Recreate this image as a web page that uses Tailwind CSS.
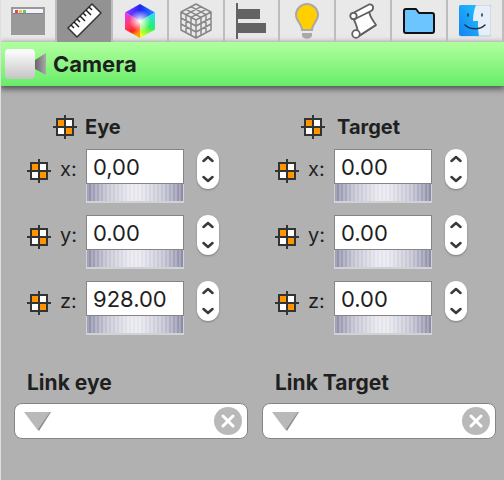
<!DOCTYPE html>
<html lang="en">
<head>
    <meta charset="UTF-8">
    <meta name="viewport" content="width=device-width, initial-scale=1.0">
    <title>Camera</title>
    <script src="https://cdn.jsdelivr.net/npm/@tailwindcss/browser@4"></script>
    <style>
        body {
            font-family: Inter, "Noto Sans", sans-serif;
        }
    </style>
</head>
<body class="bg-[#b1b1b1] text-[#1f1f1f] min-h-screen border-l border-[#dedede]">

    <!-- shared icons -->
    <svg class="hidden">
        <symbol id="target-icon" viewBox="0 0 24 24">
            <path fill="#fff" d="M4 4h16v16H4z"/>
            <path fill="#ff9500" d="M4 4h8v8H4zM12 12h8v8h-8z"/>
            <path fill="none" stroke="#333" stroke-width="2" d="M4 4h16v16H4zM12 0v24M0 12h24"/>
        </symbol>
        <symbol id="chevron-up" viewBox="0 0 12 8">
            <path fill="none" stroke="#3a3a3a" stroke-width="2.5" stroke-linecap="round" stroke-linejoin="round" d="M1.5 6 6 2l4.5 4"/>
        </symbol>
        <symbol id="chevron-down" viewBox="0 0 12 8">
            <path fill="none" stroke="#3a3a3a" stroke-width="2.5" stroke-linecap="round" stroke-linejoin="round" d="M1.5 2 6 6l4.500-4"/>
        </symbol>
        <symbol id="triangle" viewBox="0 0 28 20">
            <path fill="#8c8c8c" d="M1 0h26L15 19z"/>
            <path fill="#b9b9b9" d="M0 0h26L13.500 18z"/>
        </symbol>
        <symbol id="clear" viewBox="0 0 28 28">
            <circle cx="14" cy="14" r="14" fill="#b9b9b9"/>
            <path stroke="#fff" stroke-width="3" stroke-linecap="round" d="m9 9 10 10M19 9 9 19"/>
        </symbol>
    </svg>

    <nav class="grid grid-cols-9 h-[42px] bg-[#e9e9e9]">
        <button aria-label="Window" class="flex items-center justify-center border-r-2 border-[#bdbdbd]">
            <svg class="w-[34px] h-7" viewBox="0 0 34 28">
                <path fill="#999" d="M0 0h34v28H0z"/>
                <path fill="#f3f3f8" d="M2 2h30v5H2z"/>
                <path fill="#7d7d9c" d="M2 6h30v1H2z"/>
                <path fill="#e5484a" d="M4 3h3v3H4z"/>
                <path fill="#f2c04c" d="M8 3h3v3H8z"/>
                <path fill="#6cc46a" d="M12 3h3v3h-3z"/>
            </svg>
        </button>
        <button aria-label="Measure" class="flex items-center justify-center border-r-2 border-[#bdbdbd] bg-[#929292]">
            <svg class="w-9 h-9" viewBox="0 0 36 36">
                <path fill="#fff" stroke="#333" stroke-width="1.500" stroke-linejoin="round" d="M2 25 26 1l9 9-24 24z"/>
                <path fill="none" stroke="#222" stroke-width="1.500" d="m5 22 3 3M8 19l5 5M11 16l3 3M14 13l5 5M17 10l3 3M20 7l5 5M23 4l3 3"/>
            </svg>
        </button>
        <button aria-label="Color" class="flex items-center justify-center border-r-2 border-[#bdbdbd]">
            <svg class="w-8 h-[34px]" viewBox="0 0 32 34">
                <defs>
                    <linearGradient id="cube-top" x1="0" y1="0" x2="1" y2="0">
                        <stop offset="0" stop-color="#a43cff"/><stop offset=".5" stop-color="#1c26f5"/><stop offset="1" stop-color="#2590ff"/>
                    </linearGradient>
                    <linearGradient id="cube-left" x1="0" y1="0" x2=".4" y2="1">
                        <stop offset="0" stop-color="#e23cff"/><stop offset=".5" stop-color="#ff3a6c"/><stop offset=".8" stop-color="#ff2020"/><stop offset="1" stop-color="#ff9a10"/>
                    </linearGradient>
                    <linearGradient id="cube-right" x1=".8" y1="0" x2=".3" y2="1">
                        <stop offset="0" stop-color="#25dfff"/><stop offset=".5" stop-color="#28f060"/><stop offset="1" stop-color="#eaff20"/>
                    </linearGradient>
                    <radialGradient id="cube-glow" gradientUnits="userSpaceOnUse" cx="16" cy="17" r="11">
                        <stop offset="0" stop-color="#fff"/><stop offset="1" stop-color="#fff" stop-opacity="0"/>
                    </radialGradient>
                </defs>
                <path fill="url(#cube-top)" d="M16 0 31 8.500 16 17 1 8.500z"/>
                <path fill="url(#cube-left)" d="M1 8.500 16 17v17L1 25.500z"/>
                <path fill="url(#cube-right)" d="M31 8.500 16 17v17l15-8.500z"/>
                <path fill="url(#cube-glow)" d="M16 0 31 8.500v17L16 34 1 25.500v-17z"/>
            </svg>
        </button>
        <button aria-label="Grid" class="flex items-center justify-center border-r-2 border-[#bdbdbd]">
            <svg class="w-8 h-9" viewBox="0 0 32 36">
                <path fill="none" stroke="#868686" stroke-width="1.500" stroke-linejoin="round" d="M16 1 31 9v18l-15 8-15-8V9zM1 9l15 8 15-8M16 17v18M1 15l15 8 15-8M1 21l15 8 15-8M6 11.700v18M11 14.300v18M26 11.700v18M21 14.300v18M6 6.300l15 8M11 3.700l15 8M26 6.300l-15 8M21 3.700l-15 8"/>
            </svg>
        </button>
        <button aria-label="Align" class="flex items-center justify-center border-r-2 border-[#bdbdbd]">
            <svg class="w-[30px] h-9" viewBox="0 0 30 36">
                <path fill="#636363" d="M0 0h2v36H0zM2 6h22v10H2zM2 20h28v10H2z"/>
            </svg>
        </button>
        <button aria-label="Light" class="flex items-center justify-center border-r-2 border-[#bdbdbd]">
            <svg class="w-6 h-9" viewBox="0 0 24 36">
                <path fill="#ffcf00" stroke="#a9a9a9" stroke-width="2" d="M7 27c0-6-6-9-6-15a11 11 0 0 1 22 0c0 6-6 9-6 15z"/>
                <path fill="#a9a9a9" d="M7 30h10v2c0 5-10 5-10 0z"/>
            </svg>
        </button>
        <button aria-label="Script" class="flex items-center justify-center border-r-2 border-[#bdbdbd]">
            <svg class="w-7 h-9" viewBox="0 0 28 36">
                <g fill="#fff" stroke="#606060" stroke-width="1.800" stroke-linejoin="round">
                    <path d="M4 15 20 7c0 6 3 9 7 15L10 33c-1-1 0-3-1-4C8 24 7 20 4 15z"/>
                    <path d="M4 10 20 1.500c5-1 5 5 2 6.500L6 16z"/>
                    <circle cx="4.500" cy="13" r="3.200"/>
                    <circle cx="7" cy="31" r="3.800"/>
                    <path fill="none" d="M10 33l17-11"/>
                </g>
            </svg>
        </button>
        <button aria-label="Folder" class="flex items-center justify-center border-r-2 border-[#bdbdbd]">
            <svg class="w-8 h-7" viewBox="0 0 32 28">
                <path fill="#6cc5ff" stroke="#111" stroke-width="2" stroke-linejoin="round" d="M1 4q0-2 2-2h10l3 4h13q2 0 2 2v16q0 2-2 2H3q-2 0-2-2z"/>
            </svg>
        </button>
        <button aria-label="Finder" class="flex items-center justify-center border-r-2 border-[#bdbdbd]">
            <svg class="w-8 h-8" viewBox="0 0 32 32">
                <defs>
                    <linearGradient id="face" x1="1" y1="0" x2="0" y2="1">
                        <stop offset="0" stop-color="#22c3fa"/><stop offset="1" stop-color="#1482f6"/>
                    </linearGradient>
                </defs>
                <rect width="32" height="31" rx="2" fill="#e6eff9" stroke="#8aa" stroke-width=".5"/>
                <path fill="url(#face)" d="M2 0h15c-2 5-3 10-3 16h5c0 5 0 10 1 15H2q-2 0-2-2V2q0-2 2-2z"/>
                <path fill="none" stroke="#16324f" stroke-width="1.500" stroke-linecap="round" d="M9 9v2M23 9v2M6 20c5 5 15 5 20 0"/>
            </svg>
        </button>
    </nav>

    <header class="flex items-center gap-[7px] h-11 pl-1 bg-linear-to-b from-[#b0ff9e] to-[#65ed68] shadow-[0_2px_6px_1px_rgba(0,0,0,0.55)]">
        <svg class="w-[41px] h-8" viewBox="0 0 41 32">
            <defs>
                <linearGradient id="cam-body" x1="0" y1="0" x2="0" y2="1">
                    <stop offset="0" stop-color="#fff"/><stop offset="1" stop-color="#c5c5c5"/>
                </linearGradient>
                <linearGradient id="cam-lens" x1="0" y1="0" x2="1" y2="0">
                    <stop offset="0" stop-color="#666"/><stop offset="1" stop-color="#aaa"/>
                </linearGradient>
            </defs>
            <path fill="url(#cam-lens)" d="M30 12 41 5v22l-11-6z"/>
            <rect x="0" y="1" width="30" height="30" rx="4" fill="url(#cam-body)"/>
        </svg>
        <h1 class="text-[22px] leading-7 font-bold">Camera</h1>
    </header>

    <main class="grid grid-cols-2 gap-x-[14px] pl-[13px] pr-2 pt-[27px]">
        <section>
            <div class="flex items-center gap-2 h-7 pl-[39px]">
                <svg class="size-6"><use href="#target-icon"/></svg>
                <h2 class="text-xl font-bold">Eye</h2>
            </div>
            <div class="pl-[13px] pt-2 flex flex-col gap-3">
                <div class="flex items-start h-[54px]">
                    <svg class="size-6 mt-[10px] shrink-0"><use href="#target-icon"/></svg>
                    <label for="eye-x" class="w-[35px] pl-[9px] pt-2 text-xl leading-6 shrink-0">x:</label>
                    <div class="w-[98px]">
                        <input id="eye-x" type="text" value="0,00" class="block w-full h-[35px] px-1.5 bg-white border border-[#858585] text-[22px]">
                        <input type="range" aria-label="Eye x wheel" class="block w-full h-[19px] appearance-none border-x border-b-2 border-[#d2d2d6] bg-[repeating-linear-gradient(90deg,#ffffff30_0_2px,#77779908_2px_4px),linear-gradient(90deg,#8b8ba6,#c4c4d3_20%,#e8e8ef_45%,#e8e8ef_55%,#c4c4d3_80%,#8b8ba6)] [&::-webkit-slider-thumb]:opacity-0">
                    </div>
                    <div class="flex flex-col ml-[13px] w-[22px] h-10 rounded-[11px] bg-white shadow-[0_1px_2px_rgba(0,0,0,0.3)]">
                        <button aria-label="Increase eye x" class="flex flex-1 items-center justify-center"><svg class="w-3 h-2"><use href="#chevron-up"/></svg></button>
                        <button aria-label="Decrease eye x" class="flex flex-1 items-center justify-center"><svg class="w-3 h-2"><use href="#chevron-down"/></svg></button>
                    </div>
                </div>
                <div class="flex items-start h-[54px]">
                    <svg class="size-6 mt-[10px] shrink-0"><use href="#target-icon"/></svg>
                    <label for="eye-y" class="w-[35px] pl-[9px] pt-2 text-xl leading-6 shrink-0">y:</label>
                    <div class="w-[98px]">
                        <input id="eye-y" type="text" value="0.00" class="block w-full h-[35px] px-1.5 bg-white border border-[#858585] text-[22px]">
                        <input type="range" aria-label="Eye y wheel" class="block w-full h-[19px] appearance-none border-x border-b-2 border-[#d2d2d6] bg-[repeating-linear-gradient(90deg,#ffffff30_0_2px,#77779908_2px_4px),linear-gradient(90deg,#8b8ba6,#c4c4d3_20%,#e8e8ef_45%,#e8e8ef_55%,#c4c4d3_80%,#8b8ba6)] [&::-webkit-slider-thumb]:opacity-0">
                    </div>
                    <div class="flex flex-col ml-[13px] w-[22px] h-10 rounded-[11px] bg-white shadow-[0_1px_2px_rgba(0,0,0,0.3)]">
                        <button aria-label="Increase eye y" class="flex flex-1 items-center justify-center"><svg class="w-3 h-2"><use href="#chevron-up"/></svg></button>
                        <button aria-label="Decrease eye y" class="flex flex-1 items-center justify-center"><svg class="w-3 h-2"><use href="#chevron-down"/></svg></button>
                    </div>
                </div>
                <div class="flex items-start h-[54px]">
                    <svg class="size-6 mt-[10px] shrink-0"><use href="#target-icon"/></svg>
                    <label for="eye-z" class="w-[35px] pl-[9px] pt-2 text-xl leading-6 shrink-0">z:</label>
                    <div class="w-[98px]">
                        <input id="eye-z" type="text" value="928.00" class="block w-full h-[35px] px-1.5 bg-white border border-[#858585] text-[22px]">
                        <input type="range" aria-label="Eye z wheel" class="block w-full h-[19px] appearance-none border-x border-b-2 border-[#d2d2d6] bg-[repeating-linear-gradient(90deg,#ffffff30_0_2px,#77779908_2px_4px),linear-gradient(90deg,#8b8ba6,#c4c4d3_20%,#e8e8ef_45%,#e8e8ef_55%,#c4c4d3_80%,#8b8ba6)] [&::-webkit-slider-thumb]:opacity-0">
                    </div>
                    <div class="flex flex-col ml-[13px] w-[22px] h-10 rounded-[11px] bg-white shadow-[0_1px_2px_rgba(0,0,0,0.3)]">
                        <button aria-label="Increase eye z" class="flex flex-1 items-center justify-center"><svg class="w-3 h-2"><use href="#chevron-up"/></svg></button>
                        <button aria-label="Decrease eye z" class="flex flex-1 items-center justify-center"><svg class="w-3 h-2"><use href="#chevron-down"/></svg></button>
                    </div>
                </div>
            </div>
            <label for="link-eye" class="block pl-[13px] pt-[34px] text-[21px] leading-7 font-bold">Link eye</label>
            <div class="relative mt-[6px]">
                <select id="link-eye" class="block w-full h-9 appearance-none rounded-lg border border-[#858585] bg-white"><option></option></select>
                <svg class="absolute left-[10px] top-[9px] w-7 h-5 pointer-events-none"><use href="#triangle"/></svg>
                <button aria-label="Clear link eye" class="absolute right-[6px] top-1"><svg class="size-7"><use href="#clear"/></svg></button>
            </div>
        </section>

        <section>
            <div class="flex items-center gap-3 h-7 pl-[39px]">
                <svg class="size-6"><use href="#target-icon"/></svg>
                <h2 class="text-xl font-bold">Target</h2>
            </div>
            <div class="pl-[13px] pt-2 flex flex-col gap-3">
                <div class="flex items-start h-[54px]">
                    <svg class="size-6 mt-[10px] shrink-0"><use href="#target-icon"/></svg>
                    <label for="target-x" class="w-[35px] pl-[9px] pt-2 text-xl leading-6 shrink-0">x:</label>
                    <div class="w-[98px]">
                        <input id="target-x" type="text" value="0.00" class="block w-full h-[35px] px-1.5 bg-white border border-[#858585] text-[22px]">
                        <input type="range" aria-label="Target x wheel" class="block w-full h-[19px] appearance-none border-x border-b-2 border-[#d2d2d6] bg-[repeating-linear-gradient(90deg,#ffffff30_0_2px,#77779908_2px_4px),linear-gradient(90deg,#8b8ba6,#c4c4d3_20%,#e8e8ef_45%,#e8e8ef_55%,#c4c4d3_80%,#8b8ba6)] [&::-webkit-slider-thumb]:opacity-0">
                    </div>
                    <div class="flex flex-col ml-[13px] w-[22px] h-10 rounded-[11px] bg-white shadow-[0_1px_2px_rgba(0,0,0,0.3)]">
                        <button aria-label="Increase target x" class="flex flex-1 items-center justify-center"><svg class="w-3 h-2"><use href="#chevron-up"/></svg></button>
                        <button aria-label="Decrease target x" class="flex flex-1 items-center justify-center"><svg class="w-3 h-2"><use href="#chevron-down"/></svg></button>
                    </div>
                </div>
                <div class="flex items-start h-[54px]">
                    <svg class="size-6 mt-[10px] shrink-0"><use href="#target-icon"/></svg>
                    <label for="target-y" class="w-[35px] pl-[9px] pt-2 text-xl leading-6 shrink-0">y:</label>
                    <div class="w-[98px]">
                        <input id="target-y" type="text" value="0.00" class="block w-full h-[35px] px-1.5 bg-white border border-[#858585] text-[22px]">
                        <input type="range" aria-label="Target y wheel" class="block w-full h-[19px] appearance-none border-x border-b-2 border-[#d2d2d6] bg-[repeating-linear-gradient(90deg,#ffffff30_0_2px,#77779908_2px_4px),linear-gradient(90deg,#8b8ba6,#c4c4d3_20%,#e8e8ef_45%,#e8e8ef_55%,#c4c4d3_80%,#8b8ba6)] [&::-webkit-slider-thumb]:opacity-0">
                    </div>
                    <div class="flex flex-col ml-[13px] w-[22px] h-10 rounded-[11px] bg-white shadow-[0_1px_2px_rgba(0,0,0,0.3)]">
                        <button aria-label="Increase target y" class="flex flex-1 items-center justify-center"><svg class="w-3 h-2"><use href="#chevron-up"/></svg></button>
                        <button aria-label="Decrease target y" class="flex flex-1 items-center justify-center"><svg class="w-3 h-2"><use href="#chevron-down"/></svg></button>
                    </div>
                </div>
                <div class="flex items-start h-[54px]">
                    <svg class="size-6 mt-[10px] shrink-0"><use href="#target-icon"/></svg>
                    <label for="target-z" class="w-[35px] pl-[9px] pt-2 text-xl leading-6 shrink-0">z:</label>
                    <div class="w-[98px]">
                        <input id="target-z" type="text" value="0.00" class="block w-full h-[35px] px-1.5 bg-white border border-[#858585] text-[22px]">
                        <input type="range" aria-label="Target z wheel" class="block w-full h-[19px] appearance-none border-x border-b-2 border-[#d2d2d6] bg-[repeating-linear-gradient(90deg,#ffffff30_0_2px,#77779908_2px_4px),linear-gradient(90deg,#8b8ba6,#c4c4d3_20%,#e8e8ef_45%,#e8e8ef_55%,#c4c4d3_80%,#8b8ba6)] [&::-webkit-slider-thumb]:opacity-0">
                    </div>
                    <div class="flex flex-col ml-[13px] w-[22px] h-10 rounded-[11px] bg-white shadow-[0_1px_2px_rgba(0,0,0,0.3)]">
                        <button aria-label="Increase target z" class="flex flex-1 items-center justify-center"><svg class="w-3 h-2"><use href="#chevron-up"/></svg></button>
                        <button aria-label="Decrease target z" class="flex flex-1 items-center justify-center"><svg class="w-3 h-2"><use href="#chevron-down"/></svg></button>
                    </div>
                </div>
            </div>
            <label for="link-target" class="block pl-[13px] pt-[34px] text-[21px] leading-7 font-bold">Link Target</label>
            <div class="relative mt-[6px]">
                <select id="link-target" class="block w-full h-9 appearance-none rounded-lg border border-[#858585] bg-white"><option></option></select>
                <svg class="absolute left-[10px] top-[9px] w-7 h-5 pointer-events-none"><use href="#triangle"/></svg>
                <button aria-label="Clear link target" class="absolute right-[6px] top-1"><svg class="size-7"><use href="#clear"/></svg></button>
            </div>
        </section>
    </main>
</body>
</html>
